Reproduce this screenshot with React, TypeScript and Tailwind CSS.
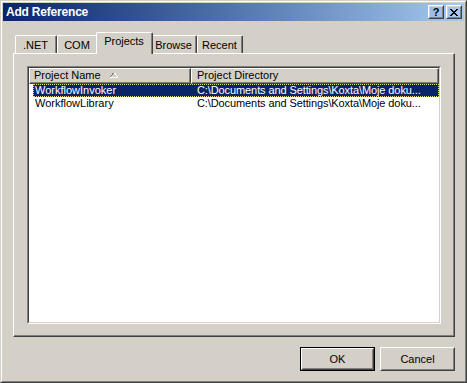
import React from "react";

// Win2000-style "Add Reference" dialog

const Raised = ({ className = "", children }: { className?: string; children?: React.ReactNode }) => (
  <div className={`border border-t-white border-l-white border-r-[#404040] border-b-[#404040] ${className}`}>
    <div className="w-full h-full border border-t-[#d4d0c8] border-l-[#d4d0c8] border-r-[#808080] border-b-[#808080] flex items-center justify-center">
      {children}
    </div>
  </div>
);

const Tab = ({ label, w }: { label: string; w: string }) => (
  <div
    className={`${w} h-[18px] flex items-center justify-center border-t border-l border-t-white border-l-white border-r border-r-[#404040] rounded-t-[2px]`}
  >
    <div className="w-full h-full flex items-center justify-center border-r border-r-[#808080] pt-px">{label}</div>
  </div>
);

const SelectedTab = ({ label }: { label: string }) => (
  <div className="w-[57px] h-[22px] -mx-[2px] -mb-px relative z-10 bg-[#d4d0c8] border-t border-l border-t-white border-l-white border-r border-r-[#404040] rounded-t-[2px]">
    <div className="w-full h-full flex justify-center border-r border-r-[#808080] pt-[3px]">{label}</div>
  </div>
);

const rows = [
  { name: "WorkflowInvoker", dir: "C:\\Documents and Settings\\Koxta\\Moje doku...", selected: true },
  { name: "WorkflowLibrary", dir: "C:\\Documents and Settings\\Koxta\\Moje doku...", selected: false },
];

export default function App() {
  return (
    <div className="w-[467px] h-[383px] bg-[#d4d0c8] border border-t-[#d4d0c8] border-l-[#d4d0c8] border-r-[#404040] border-b-[#404040] font-['Liberation_Sans',Arial,sans-serif] text-[11px] text-black leading-none select-none">
      <div className="w-full h-full border border-t-white border-l-white border-r-[#808080] border-b-[#808080] p-px flex flex-col">
        {/* title bar */}
        <div className="h-[18px] flex items-center bg-linear-to-r from-[#0a246a] to-[#a6caf0] pl-[3px] pr-[2px]">
          <span className="text-white font-bold text-[12px] tracking-[-0.2px] flex-1">Add Reference</span>
          <Raised className="w-[16px] h-[14px]">
            <span className="font-bold text-[11px] leading-none mt-px">?</span>
          </Raised>
          <Raised className="w-[16px] h-[14px] ml-[2px]">
            <svg width="8" height="7" viewBox="0 0 8 7" shapeRendering="crispEdges">
              <path d="M0 0h2v1h-2zM6 0h2v1h-2zM1 1h2v1h-2zM5 1h2v1h-2zM2 2h4v1h-4zM3 3h2v1h-2zM2 4h4v1h-4zM1 5h2v1h-2zM5 5h2v1h-2zM0 6h2v1h-2zM6 6h2v1h-2z" fill="#000" />
            </svg>
          </Raised>
        </div>

        <div className="flex-1 flex flex-col pl-[10px] pr-[9px] pt-[11px] pb-[9px]">
          {/* tabs */}
          <div className="h-[21px] flex items-end pl-[2px]">
            <Tab label=".NET" w="w-[42px]" />
            <Tab label="COM" w="w-[41px]" />
            <SelectedTab label="Projects" />
            <Tab label="Browse" w="w-[46px]" />
            <Tab label="Recent" w="w-[46px]" />
          </div>

          {/* tab panel */}
          <div className="flex-1 border-t border-l border-t-white border-l-white border-r border-b border-r-[#404040] border-b-[#404040]">
            <div className="w-full h-full border-r border-b border-r-[#808080] border-b-[#808080] pt-[12px] pb-[11px] pl-[13px] pr-[12px] flex">
              {/* list view */}
              <div className="flex-1 border border-t-[#808080] border-l-[#808080] border-r-white border-b-white">
                <div className="w-full h-full border border-t-[#404040] border-l-[#404040] border-r-[#d4d0c8] border-b-[#d4d0c8] bg-white flex flex-col">
                  {/* header */}
                  <div className="h-[16px] flex">
                    <div className="w-[162px] border-t border-l border-t-white border-l-white border-r border-b border-r-[#404040] border-b-[#404040] bg-[#d4d0c8]">
                      <div className="h-full flex items-center border-r border-b border-r-[#808080] border-b-[#808080] pl-[4px]">
                        <span>Project Name</span>
                        <svg width="8" height="5" viewBox="0 0 8 5" className="ml-[9px]" shapeRendering="crispEdges">
                          <path d="M3.5 0L0 4.5" stroke="#808080" fill="none" />
                          <path d="M4.5 0L8 4.5M0 4.5h8" stroke="#ffffff" fill="none" />
                        </svg>
                      </div>
                    </div>
                    <div className="flex-1 border-t border-l border-t-white border-l-white border-r border-b border-r-[#404040] border-b-[#404040] bg-[#d4d0c8]">
                      <div className="h-full flex items-center border-r border-b border-r-[#808080] border-b-[#808080] pl-[5px]">
                        Project Directory
                      </div>
                    </div>
                  </div>
                  {/* rows */}
                  <div className="flex flex-col pl-[4px]">
                    {rows.map((r) => (
                      <div
                        key={r.name}
                        className={`h-[13px] flex items-center ${
                          r.selected ? "bg-[#0a246a] text-white outline outline-1 outline-dotted outline-offset-[-1px] outline-[#e6d58c]" : ""
                        }`}
                      >
                        <div className="w-[158px] pl-[2px]">{r.name}</div>
                        <div className="pl-[6px] tracking-[-0.1px]">{r.dir}</div>
                      </div>
                    ))}
                  </div>
                </div>
              </div>
            </div>
          </div>

          {/* buttons */}
          <div className="mt-[10px] flex justify-end gap-[5px]">
            <div className="w-[75px] h-[24px] border border-black">
              <Raised className="w-full h-full">
                <span>OK</span>
              </Raised>
            </div>
            <Raised className="w-[75px] h-[24px]">Cancel</Raised>
          </div>
        </div>
      </div>
    </div>
  );
}
